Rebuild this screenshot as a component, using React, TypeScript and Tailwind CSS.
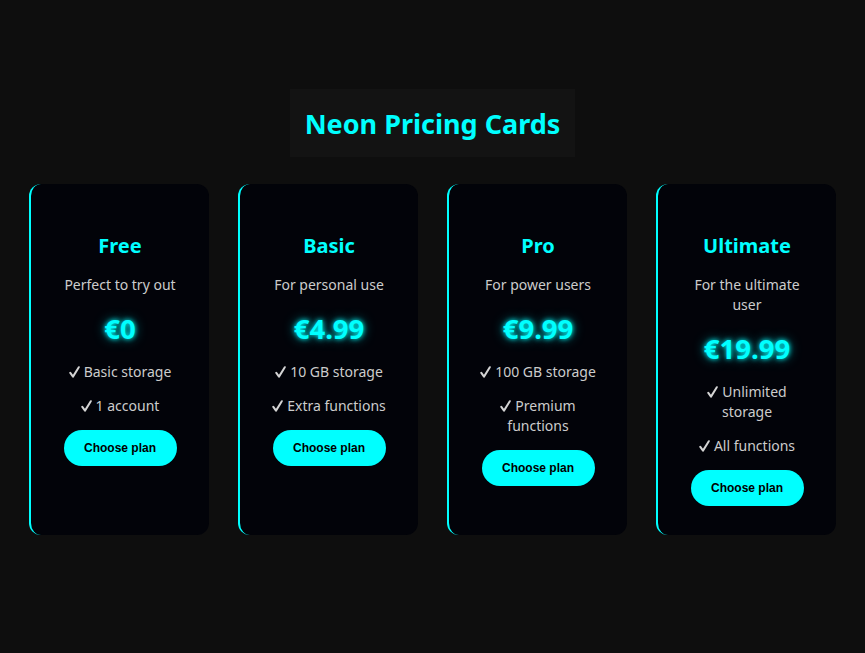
const plans = [
  { name: "Free", desc: "Perfect to try out", price: "€0", features: ["Basic storage", "1 account"] },
  { name: "Basic", desc: "For personal use", price: "€4.99", features: ["10 GB storage", "Extra functions"] },
  { name: "Pro", desc: "For power users", price: "€9.99", features: ["100 GB storage", "Premium functions"] },
  { name: "Ultimate", desc: "For the ultimate user", price: "€19.99", features: ["Unlimited storage", "All functions"] },
];

function Check() {
  return (
    <svg
      viewBox="0 0 11 12"
      className="inline-block h-[12px] w-[11px] align-[-1px] mr-[4px]"
      fill="none"
      stroke="#d4d4d4"
      strokeWidth={2}
      strokeLinecap="round"
      strokeLinejoin="round"
      aria-hidden="true"
    >
      <path d="M1.3 6.8 L4 10.6 L9.8 1.2" />
    </svg>
  );
}

function PlanCard({ plan }: { plan: (typeof plans)[number] }) {
  return (
    <div className="w-[180px] rounded-[12px] border-l-2 border-[#00ffff] bg-[#020309] pt-[48px] pb-[29px] px-[26px] text-center">
      <h3 className="text-[20px] leading-[28px] font-bold text-[#00ffff]">{plan.name}</h3>
      <p className="mt-[15px] text-[14px] leading-[20px] text-[#cccccc]">{plan.desc}</p>
      <div className="mt-[16px] text-[27.5px] leading-[36px] font-bold text-[#00ffff] [text-shadow:0_0_5px_#00ffff,0_0_12px_rgba(0,255,255,0.55)]">
        {plan.price}
      </div>
      <ul className="mt-[15px] flex flex-col gap-[14px] text-[14px] leading-[20px] text-[#cccccc]">
        {plan.features.map((f) => (
          <li key={f}>
            <Check />
            {f}
          </li>
        ))}
      </ul>
      <button
        type="button"
        className="mt-[13.5px] h-[36px] w-[113px] rounded-full bg-[#00ffff] font-['Liberation_Sans',Arial,sans-serif] text-[12px] font-bold text-black"
      >
        Choose plan
      </button>
    </div>
  );
}

export default function App() {
  return (
    <div className="min-h-[653px] bg-[#0e0e0e] pt-[89px] font-['Noto_Sans',sans-serif]">
      <div className="flex justify-center">
        <h1 className="h-[68px] flex items-center bg-[#131313] px-[15px] pt-[2px] text-[27px] font-bold text-[#00ffff]">
          Neon Pricing Cards
        </h1>
      </div>
      <div className="mt-[27px] flex items-stretch justify-center gap-[29px]">
        {plans.map((p) => (
          <PlanCard key={p.name} plan={p} />
        ))}
      </div>
    </div>
  );
}
